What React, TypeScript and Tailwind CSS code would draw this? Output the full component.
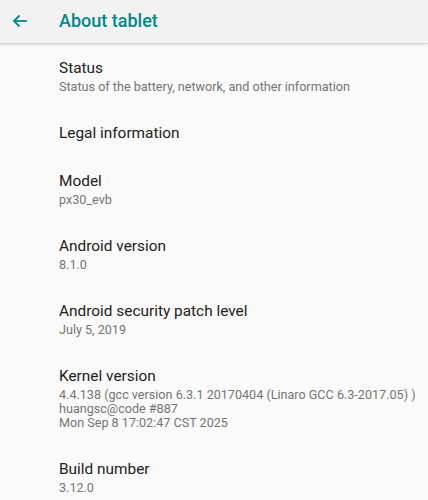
import React from 'react';

type Pref = { title: string; summary?: string[] };

const prefs: Pref[] = [
  { title: 'Status', summary: ['Status of the battery, network, and other information'] },
  { title: 'Legal information' },
  { title: 'Model', summary: ['px30_evb'] },
  { title: 'Android version', summary: ['8.1.0'] },
  { title: 'Android security patch level', summary: ['July 5, 2019'] },
  {
    title: 'Kernel version',
    summary: [
      '4.4.138 (gcc version 6.3.1 20170404 (Linaro GCC 6.3-2017.05) )',
      'huangsc@code #887',
      'Mon Sep 8 17:02:47 CST 2025',
    ],
  },
  { title: 'Build number', summary: ['3.12.0'] },
];

const PrefRow: React.FC<{ item: Pref }> = ({ item }) => (
  <div className="pl-[59px] pr-2 py-[15px]">
    <div className="text-[15.4px] leading-[18px] text-[#212121]">{item.title}</div>
    {item.summary && (
      <div className="mt-[3px] text-[12.6px] leading-[14px] text-[#757575]">
        {item.summary.map((line, i) => (
          <div key={i} className="whitespace-nowrap">{line}</div>
        ))}
      </div>
    )}
  </div>
);

export default function App() {
  return (
    <div className="w-[428px] h-[500px] overflow-hidden bg-[#fafafa] font-['Roboto','Liberation_Sans',sans-serif]">
      <header className="relative z-10 h-[44px] flex items-center bg-[#f2f2f2] border-b border-[#d6d6d6] shadow-[0_1px_2px_rgba(0,0,0,0.12)]">
        <div className="w-[59px] flex items-center pl-[12px] -mt-[1px]">
          <svg width="16" height="14" viewBox="0 0 16 14" fill="none" stroke="#00898a" strokeWidth="1.8">
            <path d="M15 7H2" />
            <path d="M7.5 1.5L2 7l5.5 5.5" />
          </svg>
        </div>
        <h1 className="text-[18px] font-medium text-[#00898a] leading-none -mt-[2px]">About tablet</h1>
      </header>
      <div>
        {prefs.map((p) => (
          <PrefRow key={p.title} item={p} />
        ))}
      </div>
    </div>
  );
}
